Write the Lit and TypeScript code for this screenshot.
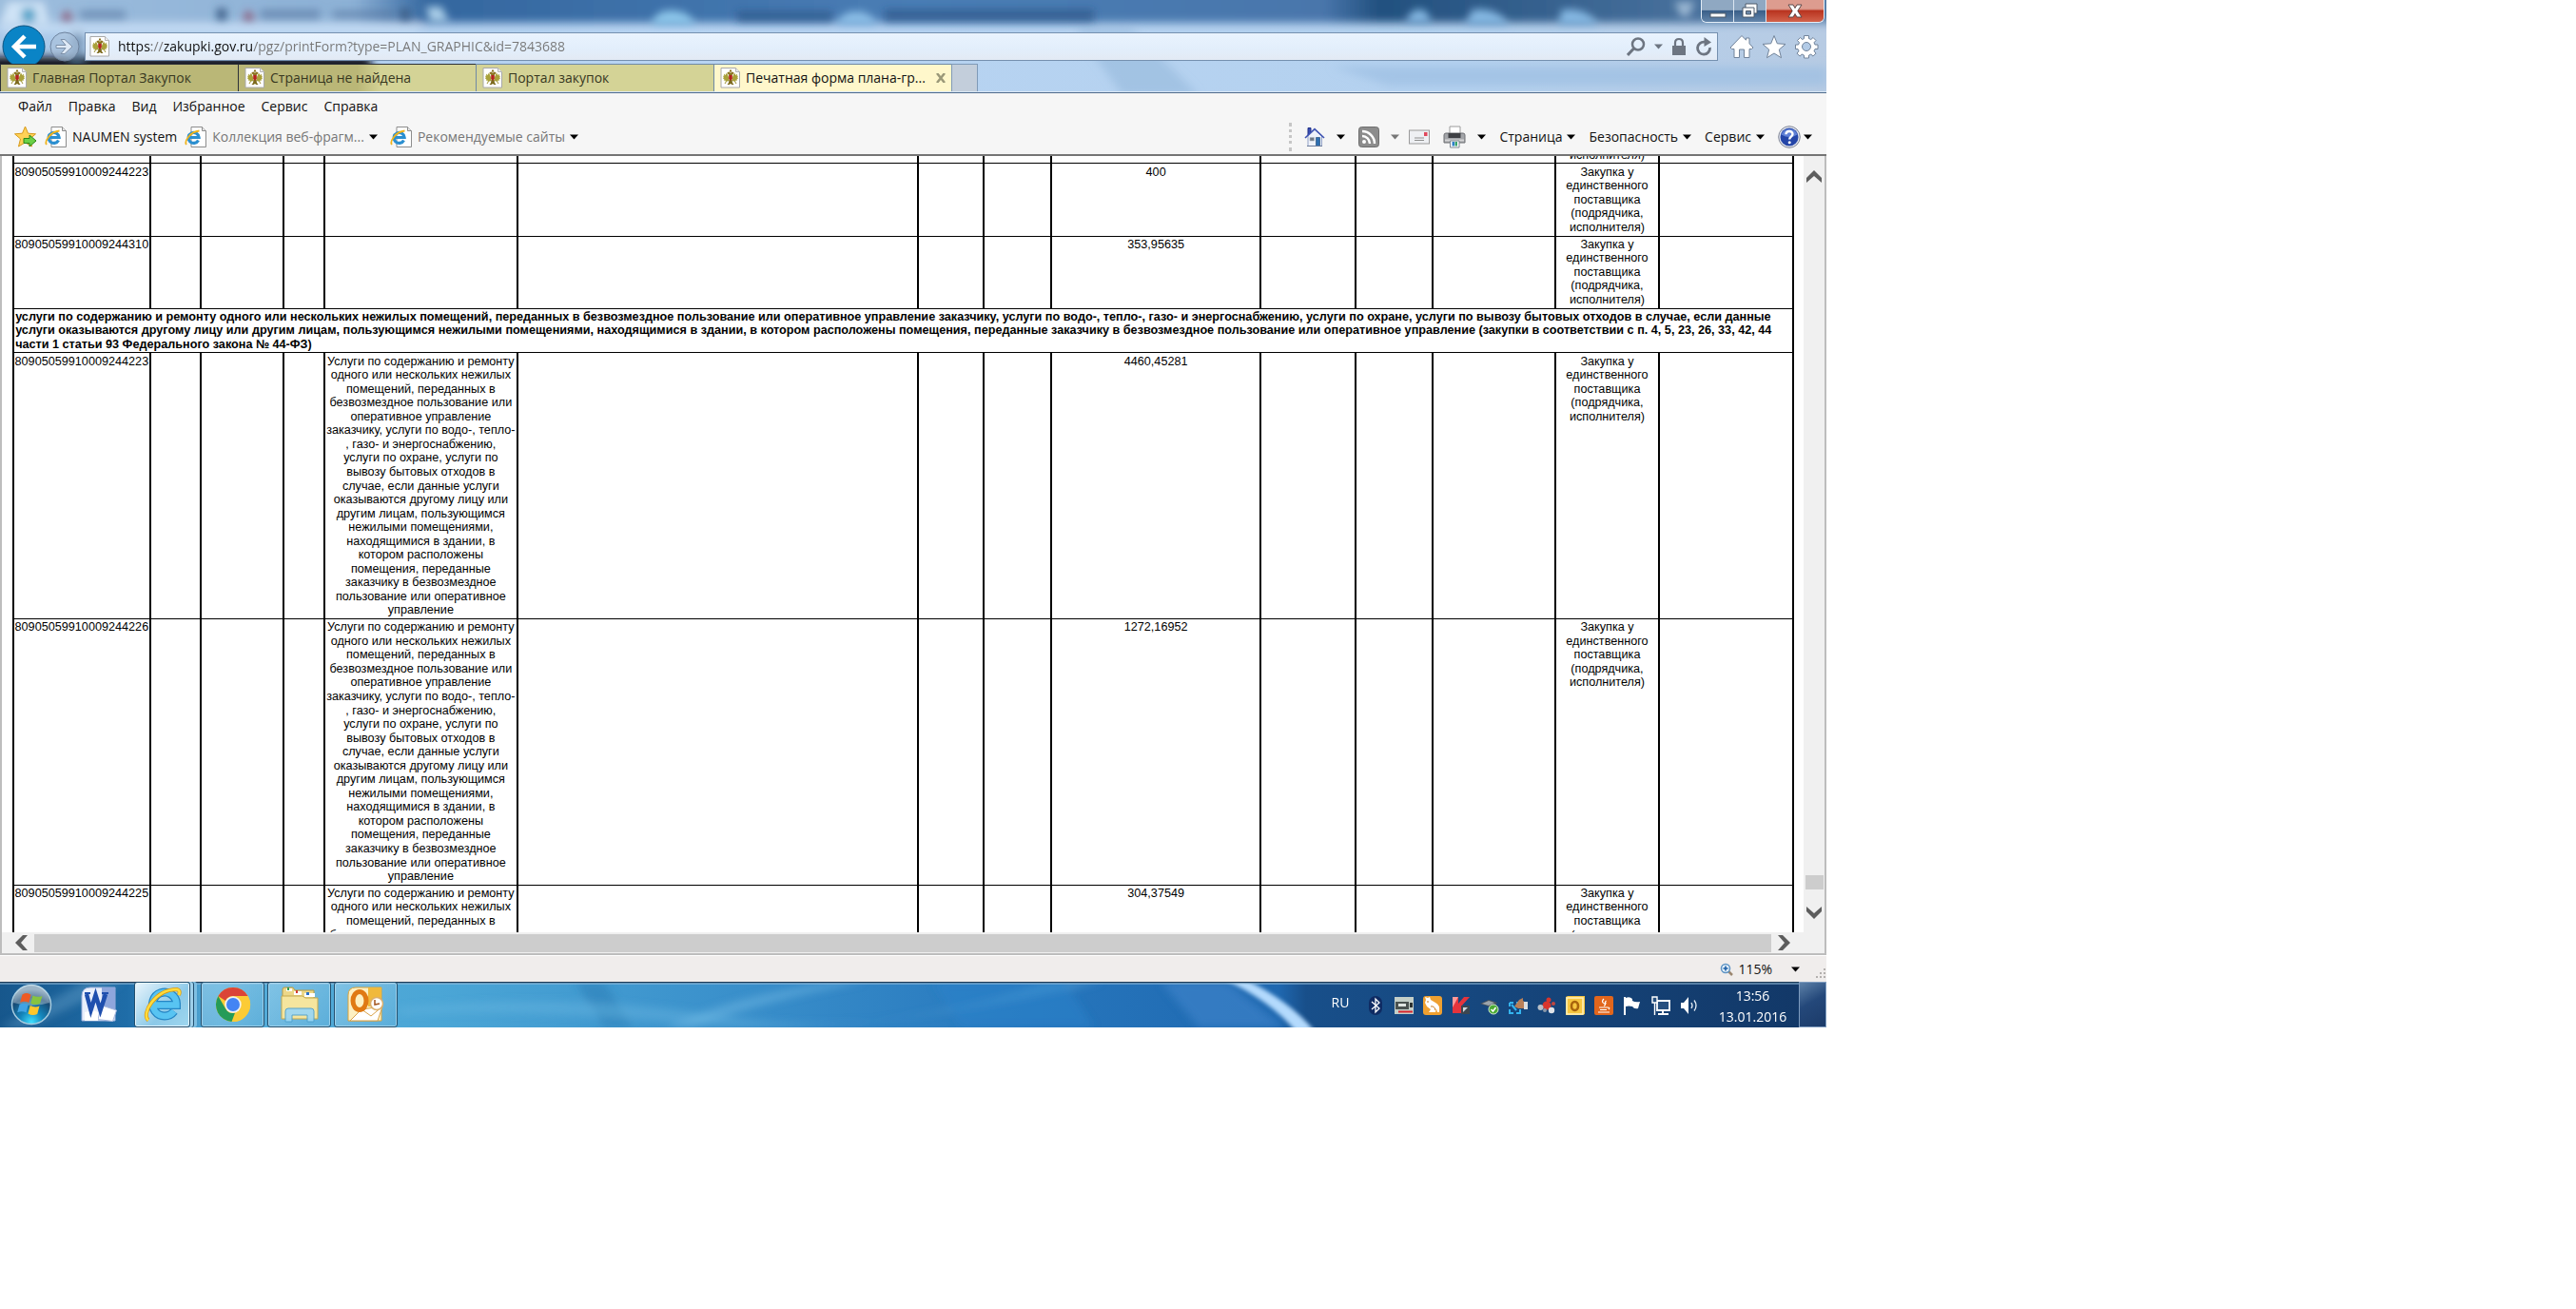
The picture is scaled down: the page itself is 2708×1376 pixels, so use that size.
import { LitElement, html, svg, css, nothing, type TemplateResult } from "lit";
import { customElement, property, state } from "lit/decorators.js";

const METHOD = "Закупка у единственного поставщика (подрядчика, исполнителя)";

const SECTION =
  "услуги по содержанию и ремонту одного или нескольких нежилых помещений, переданных в безвозмездное пользование или оперативное управление заказчику, услуги по водо-, тепло-, газо- и энергоснабжению, услуги по охране, услуги по вывозу бытовых отходов в случае, если данные услуги оказываются другому лицу или другим лицам, пользующимся нежилыми помещениями, находящимися в здании, в котором расположены помещения, переданные заказчику в безвозмездное пользование или оперативное управление (закупки в соответствии с п. 4, 5, 23, 26, 33, 42, 44 части 1 статьи 93 Федерального закона № 44-ФЗ)";

const SERVICES = html`Услуги по содержанию и ремонту одного или нескольких нежилых помещений,
переданных в безвозмездное пользование или оперативное управление заказчику, услуги по водо-,
тепло-<br />, газо- и энергоснабжению,<br />услуги по охране, услуги по<br />вывозу бытовых отходов в<br />случае,
если данные услуги<br />оказываются другому лицу или<br />другим лицам, пользующимся нежилыми
помещениями,<br />находящимися в здании, в<br />котором расположены<br />помещения, переданные<br />заказчику в
безвозмездное пользование или оперативное управление`;

interface PlanRow {
  code?: string;
  service?: boolean;
  price?: string;
  section?: string;
  method?: string;
}

const ROWS: PlanRow[] = [
  { method: "исполнителя)" },
  { code: "80905059910009244223", price: "400" },
  { code: "80905059910009244310", price: "353,95635" },
  { section: SECTION },
  { code: "80905059910009244223", service: true, price: "4460,45281" },
  { code: "80905059910009244226", service: true, price: "1272,16952" },
  { code: "80905059910009244225", service: true, price: "304,37549" },
];

/* Column widths of the plan at 100 % zoom. */
const COLUMNS = [125, 46, 76, 37, 177, 366, 60, 62, 191, 87, 70, 113, 94, 123];

/* ---------- icons ---------- */

const eagle = html`<svg class="page-icon" viewBox="0 0 22 22" width="22" height="22" aria-hidden="true">
  <path d="M1 .5h15.500l4 4V21H1z" fill="#fff" stroke="#a8a8a8" />
  <path d="M16.500 .5v4h4" fill="#eee" stroke="#b5b5b5" />
  <path d="M9.500 11 7 5.500 5.500 8 4 6.500 4.200 9 3 8.500l.8 2.300-1 .2 1.700 1.700-.8.800 2.300.3-.5 1.200L9.500 14z" fill="#a9a13a" />
  <path d="M12.500 11 15 5.500 16.500 8 18 6.500 17.800 9l1.200-.5-.8 2.300 1 .2-1.700 1.700.8.800-2.300.3.5 1.200L12.500 14z" fill="#a9a13a" />
  <path d="M8 6.500 7.500 5 10 4.500l1 1.500 1-1.500 2.500.5L14 6.500 12.500 8h-3zM10 2.500h2v2h-2z" fill="#8c7420" />
  <path d="M9.500 13h3l.5 3 1.500 2h-2L11 17l-1.500 1h-2L9 16z" fill="#7d6a1e" />
  <path d="M9.200 8h3.600v4L11 13.700 9.200 12z" fill="#b3241c" />
  <path d="M6.500 14.500 5 17m10.500-2.500L17 17" stroke="#9c9030" />
</svg>`;

const iePage = html`<svg viewBox="0 0 24 24" width="24" height="24" aria-hidden="true">
  <path d="M7 1.500h11.500l4 4v17H7z" fill="#fff" stroke="#8d8d8d" />
  <path d="M18.500 1.500v4h4" fill="#e8e8e8" stroke="#8d8d8d" />
  <path d="M14.500 15.500a5.500 5.500 0 1 1 .6-3H5" fill="none" stroke="#2b8fd0" stroke-width="3.200" />
  <path d="M2 20C-.5 17 5.500 6.500 15.500 5.500" fill="none" stroke="#f0b41c" stroke-width="1.800" />
</svg>`;

const caret = (gray = false) => html`<svg class="caret" viewBox="0 0 9 6" width="9" height="6" aria-hidden="true">
  <path d="M0 .5h9L4.500 5.500z" fill=${gray ? "#777" : "#000"} />
</svg>`;

const toolIcons = {
  star: html`<svg viewBox="0 0 24 24" width="24" height="24" aria-hidden="true">
    <path d="M11.500 1l3 7.200 8 .6-6 5.200 2 8-7-4.200L4.500 22l2-8-6-5.200 8-.6z" fill="#ffd257" stroke="#d79a1c" />
    <path d="M10 13.500h6v-3.500l7 6-7 6V18.500h-6z" fill="#6bd147" stroke="#2c8418" />
  </svg>`,
  home: html`<svg viewBox="0 0 22 22" width="22" height="22" aria-hidden="true">
    <path d="M4 1.500h3V6L4 9z" fill="#3a4fb5" stroke="#1e2f86" />
    <path d="M4 10v10.500h14.500V10L11 3.500z" fill="#eef2fa" stroke="#93a2c6" />
    <path d="M1 12 11 2.500 21 12" fill="none" stroke="#3c51b2" stroke-width="1.600" />
    <path d="M6 11.500h4.500V15H6z" fill="#6f7885" stroke="#aab3c0" stroke-width=".6" />
    <path d="M12.500 11.500h4v9h-4z" fill="#2d6fb0" stroke="#17406f" stroke-width=".6" />
    <path d="M3 20.500h16" stroke="#6d7d9c" />
  </svg>`,
  rss: html`<svg viewBox="0 0 22 22" width="22" height="22" aria-hidden="true">
    <rect x=".5" y=".5" width="21" height="21" rx="3" fill="#8c8c8c" stroke="#6f6f6f" />
    <circle cx="6" cy="16" r="2" fill="#fff" />
    <path d="M4 10a8 8 0 0 1 8 8M4 5a13 13 0 0 1 13 13" fill="none" stroke="#fff" stroke-width="2.500" />
  </svg>`,
  mail: html`<svg viewBox="0 0 22 16" width="22" height="16" aria-hidden="true">
    <rect x=".5" y="1" width="21" height="14" fill="#eef0f3" stroke="#9a9a9a" />
    <path d="M16 3h3.500v4H16z" fill="#e0495c" />
    <path d="M6 9h10M6 11.500h10" stroke="#8f8f8f" />
  </svg>`,
  print: html`<svg viewBox="0 0 24 24" width="24" height="24" aria-hidden="true">
    <path d="M7 1h11v9H7z" fill="#fff" stroke="#9b9b9b" />
    <path d="M1 10q0-2 2-2h18q2 0 2 2v8H1z" fill="#a3a5a9" stroke="#6e7074" />
    <path d="M5.500 8h13v5h-13z" fill="#3f4145" />
    <path d="M2 15.500h20" stroke="#d5d5d5" stroke-width="2" />
    <path d="M7.500 16h9.500v7H7.500z" fill="#fff" stroke="#7d8790" />
    <path d="M9.500 17h2.500v4.500H9.500z" fill="#2f7fc9" />
    <path d="M12.500 17H15v4.500h-2.500z" fill="#39a36d" />
  </svg>`,
  help: html`<svg viewBox="0 0 24 24" width="24" height="24" aria-hidden="true">
    <circle cx="12" cy="12" r="11.300" fill="#e3e6ee" stroke="#7f8595" />
    <circle cx="12" cy="12" r="9.500" fill="#2546a8" />
    <path d="M3.500 9.500a9 9 0 0 1 17 0q-8 5-17 0z" fill="#5f80d6" />
    <path d="M8.500 9.300C8.500 5 15.500 5 15.500 9c0 2.600-3.300 2.600-3.300 5.500" fill="none" stroke="#fff" stroke-width="2.400" />
    <circle cx="12.200" cy="17.700" r="1.500" fill="#fff" />
  </svg>`,
};

const taskIcons = {
  start: html`<svg viewBox="0 0 44 44" width="44" height="44" aria-hidden="true">
    <defs>
      <radialGradient id="orb" cx="50%" cy="95%" r="85%">
        <stop offset="0" stop-color="#3fe0ff" /><stop offset=".35" stop-color="#1487bd" /><stop offset=".75" stop-color="#174a74" /><stop offset="1" stop-color="#6f93ad" />
      </radialGradient>
    </defs>
    <circle cx="22" cy="22" r="20.500" fill="url(#orb)" stroke="#a9cde0" stroke-width="1.500" />
    <path d="M3 20a19 19 0 0 1 38 0q-18 6-38 0z" fill="#fff" opacity=".32" />
    <path d="M12.500 11.500q5-3 9 .2L19.300 20q-4-2.500-9.200-.2z" fill="#ee5a24" />
    <path d="M23.500 12.500q5 2.500 10 .4L31 21q-5 2.300-9.800-.2z" fill="#86c440" />
    <path d="M9.500 22q5-2.500 9.200.1L16.500 30.500q-4-2.500-9.300-.3z" fill="#41a3e4" />
    <path d="M20.700 23q5 2.600 9.800.4L28.200 32q-5 2.300-9.700-.5z" fill="#ffc62b" />
  </svg>`,
  word: html`<svg viewBox="0 0 38 38" width="38" height="38" aria-hidden="true">
    <path d="M1 10Q1 1 10 1h26v35H1z" fill="#e9effb" stroke="#9db2dd" />
    <path d="M22 1h14v24L22 20z" fill="#8ea6dc" />
    <path d="M18 34.500 22 20l15.500 5-4 11.500z" fill="#fff" stroke="#a9b9de" />
    <path d="M4 36V27q10-3 14 0v9z" fill="#fff" />
    <path d="M6 8l4.500 17L15.500 9l5 16L26 8" fill="none" stroke="#1f4fae" stroke-width="4.500" />
    <path d="M4 7h6M22 7h7" stroke="#1f4fae" stroke-width="2" />
  </svg>`,
  ie: html`<svg viewBox="0 0 40 40" width="40" height="40" aria-hidden="true">
    <path d="M32 27a12.500 12.500 0 1 1 2.500-8v1.500H12" fill="none" stroke="#2586c5" stroke-width="9" />
    <path d="M32 27a12.500 12.500 0 1 1 2.500-8v1.500H12" fill="none" stroke="#58c4f2" stroke-width="6.500" />
    <path d="M5 36.500C-3 30 12 4 35 4q4 1 2 6" fill="none" stroke="#d99a12" stroke-width="4" />
    <path d="M5 36.500C-3 30 12 4 35 4q4 1 2 6" fill="none" stroke="#ffdb3d" stroke-width="2.600" />
  </svg>`,
  chrome: html`<svg viewBox="0 0 38 38" width="38" height="38" aria-hidden="true">
    <circle cx="19" cy="19" r="18" fill="#fccb35" />
    <path d="M3.400 10A18 18 0 0 1 34.600 10H19a9 9 0 0 0-8 5z" fill="#db4437" />
    <path d="M34.600 10H19a9 9 0 0 1 8 13l-8 14A18 18 0 0 0 34.600 10z" fill="#fccb35" />
    <path d="M3.400 10 11.200 23.500A9 9 0 0 0 21 27.700L17.500 37A18 18 0 0 1 3.400 10z" fill="#259b58" />
    <circle cx="19" cy="19" r="8.700" fill="#f1f1f1" />
    <circle cx="19" cy="19" r="7" fill="#4384f4" />
  </svg>`,
  folder: html`<svg viewBox="0 0 42 40" width="42" height="40" aria-hidden="true">
    <path d="M3 33V4q0-2 2-2h9l2 3h20v28z" fill="#ecd788" stroke="#b79b45" />
    <path d="M7 3h6v3H7z" fill="#fff" /><path d="M8 2h2v3H8z" fill="#2f9a4c" />
    <path d="M15 6h8v4h-8z" fill="#fff" /><path d="M17 5h2v3h-2z" fill="#d33b2f" />
    <path d="M26 8h11v4H26z" fill="#fff" /><path d="M28 7h3v3h-3z" fill="#2a6fc4" />
    <path d="M2 11h22l3 2h13v22H2z" fill="#f5e59e" stroke="#c4a94f" />
    <path d="M6 38V27q0-3 3-3h24q3 0 3 3v11h-7v-7H13v7z" fill="#9bd7f3" stroke="#4c9fcc" opacity=".93" />
  </svg>`,
  outlook: html`<svg viewBox="0 0 40 38" width="40" height="38" aria-hidden="true">
    <path d="M1 9Q1 1 9 1h27v35H1z" fill="#fdf0c2" stroke="#d9a23a" />
    <path d="M22 1h14v20H22z" fill="#f0b93c" />
    <path d="M3 36 15 24l22-3-5 15z" fill="#fff" stroke="#d9a34a" />
    <path d="M15 24l10 7 12-10" fill="none" stroke="#d9a34a" />
    <ellipse cx="13" cy="15" rx="7" ry="9.500" fill="none" stroke="#e07a14" stroke-width="5" />
    <circle cx="31" cy="18" r="6.500" fill="#fff" stroke="#dcae6b" stroke-width="1.500" />
    <path d="M29 14v5l5-1" fill="none" stroke="#a3531c" stroke-width="1.500" />
  </svg>`,
};

const tray: [string, TemplateResult][] = [
  ["Bluetooth", svg`<rect x="3" y="0" width="14" height="20" rx="7" fill="#0f2b63"/><path d="M6 6l8 7-4 4V3l4 4-8 7" fill="none" stroke="#fff" stroke-width="1.300"/>`],
  ["Безопасное извлечение", svg`<path d="M0 1h20v18H0z" fill="#c4cfc8"/><path d="M1 6h14v8H1z" fill="#4a5250"/><path d="M4 8h8v3H4z" fill="#dfe6e2"/><path d="M16 7h3v5h-3z" fill="#2d3231"/><path d="M4 15.500h15v2H4z" fill="#d8252c"/>`],
  ["Агент", svg`<rect width="20" height="20" rx="3" fill="#efa030"/><path d="M2 1l3 1 2-1 1 3 5 3q5 2 4 10h-2l-1-4-1 4H6l2-3-4-3-2-4 1-3z" fill="#fff"/><path d="M5 5v2m3 4q4-1 5 4" stroke="#c9791a" fill="none"/>`],
  ["Антивирус", svg`<path d="M1 1h6v7l6-7h6l-9 10v7H1z" fill="#e5343c"/><path d="M1 1h6L1 12z" fill="#ff9a9a"/><path d="M10 10h9v9h-9z" fill="#3b4650"/><path d="M12 12h5l-5 5z" fill="#cfd8dd"/>`],
  ["Устройство подключено", svg`<path d="M0 8 9 4l9 3-6 5z" fill="#4c555d"/><path d="M2 8l7-3 6 2-6 3z" fill="#9aa4ac"/><circle cx="14" cy="14" r="5" fill="#4bab34" stroke="#d4ecd0"/><path d="M11.500 14l2 2 3-4" fill="none" stroke="#fff" stroke-width="1.500"/>`],
  ["Ввод", svg`<path d="M1 7h4M1 7v4M8 18h4v-4M1 14v4h4M8 7h3" stroke="#34b4ef" stroke-width="2" fill="none"/><path d="M6 11 11 4l4-2v3l3 2v6h-8z" fill="#b98058"/><path d="M16 6h4v8h-4z" fill="#d9dde0"/><path d="M3 9l5 6" stroke="#34b4ef" stroke-width="2"/>`],
  ["Сеть агентов", svg`<circle cx="10" cy="10" r="4.500" fill="#d8352d"/><circle cx="3.500" cy="12" r="3" fill="#b9c0c8"/><circle cx="12" cy="4" r="2.500" fill="#d8352d"/><circle cx="15" cy="15" r="3.200" fill="#dfe3e8"/><circle cx="17" cy="8" r="2" fill="#c04640"/><circle cx="8" cy="15" r="2" fill="#8b98a8"/>`],
  ["Outlook", svg`<path d="M0 1 2 0h18v19l-2 1H0z" fill="#f6c640"/><path d="M1 2h17v17H1z" fill="none" stroke="#fff1bf" stroke-width="1.500"/><ellipse cx="9.500" cy="10.500" rx="3.500" ry="4.500" fill="none" stroke="#a8640c" stroke-width="2.600"/>`],
  ["Java", svg`<rect width="20" height="20" rx="2" fill="#e2661c"/><path d="M10 3q-3 3 0 4.500t0 3M12.500 5q-2 2 0 3M5 12h9M6 14.500h7M4 17h12M14 12q3 0 1 2" fill="none" stroke="#fff" stroke-width="1.200"/>`],
  ["Центр поддержки", svg`<path d="M2 1v19" stroke="#fff" stroke-width="2"/><path d="M3 2q4-2 7 1v2q3 2 8 1l-2 7q-4 1-6-2-4-1-7 0z" fill="#fff"/>`],
  ["Сеть", svg`<path d="M6 5h13v10H6z" fill="#27507f" stroke="#fff" stroke-width="1.800"/><path d="M12 15v3m-5 1h11" stroke="#fff" stroke-width="2"/><path d="M1 1h5v6H1z" fill="#27507f" stroke="#fff" stroke-width="1.400"/><path d="M3.500 7v13" stroke="#fff" stroke-width="1.400"/>`],
  ["Громкость", svg`<path d="M1 7h3l5-6v18l-5-6H1z" fill="#fff"/><path d="M12 7q2 3 0 6M15 4.500q4 5.500 0 11" fill="none" stroke="#e6eef6" stroke-width="1.300"/>`],
];

/* ---------- browser chrome ---------- */

@customElement("browser-header")
class BrowserHeader extends LitElement {
  @property() url = "";
  @state() private tabs = ["Главная Портал Закупок", "Страница не найдена", "Портал закупок", "Печатная форма плана-гр..."];
  @state() private current = 3;

  static styles = css`
    :host { display: block; position: relative; overflow: hidden; background: #b7d2ef; font: 14px/20px "Open Sans", "Noto Sans", sans-serif; }
    .glass { position: absolute; inset: 0; width: 100%; height: 100%; }
    button { border: 0; margin: 0; padding: 0; background: none; font: inherit; color: inherit; }
    svg { display: block; flex: none; }
    .title { position: relative; display: flex; justify-content: flex-end; height: 24px; padding-right: 2px; }
    .controls { display: flex; border: 1px solid #e3edf7; border-top: 0; border-radius: 0 0 6px 6px; overflow: hidden; }
    .controls button { display: grid; place-items: center; width: 34px; background: linear-gradient(#8fa8c2 0 45%, #3a5f89 50%, #6385aa); border-right: 1px solid #dbe6f1; }
    .controls .close { width: 60px; border-right: 0; background: linear-gradient(#dd9c8f 0 40%, #b93420 50%, #d2624b); }
    .nav { position: relative; display: flex; align-items: center; box-sizing: border-box; height: 43px; padding: 6px 8px 0 2px; }
    .forward { margin: 0 5px 0 4px; }
    .address { flex: 1; display: flex; align-items: center; box-sizing: border-box; height: 30px; padding: 0 5px 0 4px; border: 1px solid #7590af; background: linear-gradient(#e9f3fe, #e2eefb 60%, #e3eaf4); margin-right: 12px; }
    input { flex: 1; min-width: 0; border: 0; outline: 0; padding: 0; margin: 0 0 0 8px; height: 24px; font: inherit; color: transparent; background: linear-gradient(90deg, #111 0 35px, #777 35px 49px, #111 49px 142px, #777 142px) text; }
    .address button + button { margin-left: 9px; }
    .side { display: flex; gap: 8px; }
    .tabs { position: relative; display: flex; height: 29px; }
    .tab { display: flex; align-items: center; gap: 5px; box-sizing: border-box; width: 250px; padding: 0 6px; border: 1px solid #6f89a5; border-width: 1px 0 0 1px; background: #d4d396; color: #37371f; }
    .tab:first-child { background: #bab777; border-color: #2d3138; }
    .tab:nth-child(2) { background: linear-gradient(90deg, #bab777 50%, #d4d396 60%); border-color: #2d3138; }
    .tab.current { background: #fff7cb; color: #111; }
    .tab span { flex: 1; text-align: left; white-space: nowrap; }
    .new { width: 28px; border: 1px solid #7f9ab8; border-bottom: 0; background: #c3cedb; }
    .edge { position: relative; height: 2px; border-top: 1px solid #dbe8f5; border-bottom: 1px solid #4d6a8c; box-sizing: border-box; }
  `;

  render() {
    return html`
      <svg class="glass" viewBox="0 0 1920 98" preserveAspectRatio="none" aria-hidden="true">
        <defs>
          <filter id="soft" x="-10%" y="-40%" width="120%" height="180%"><feGaussianBlur stdDeviation="5" /></filter>
          <filter id="dim" x="-10%" y="-40%" width="120%" height="180%"><feGaussianBlur stdDeviation="4" /></filter>
          <linearGradient id="sky" x2="1"><stop offset="0" stop-color="#a9c8e8" /><stop offset=".35" stop-color="#b8d4f2" /><stop offset=".8" stop-color="#b4d1ef" /><stop offset="1" stop-color="#b7cbe3" /></linearGradient>
          <linearGradient id="top" x2="1"><stop offset="0" stop-color="#9dbddd" /><stop offset=".2" stop-color="#8db1d6" /><stop offset=".24" stop-color="#34679f" /><stop offset=".5" stop-color="#4a7db5" /><stop offset=".72" stop-color="#4976ab" /><stop offset=".75" stop-color="#22507f" /><stop offset="1" stop-color="#5b81ab" /></linearGradient>
        </defs>
        <rect width="1920" height="98" fill="url(#sky)" />
        <g filter="url(#soft)">
          <rect x="-20" y="-20" width="1960" height="44" fill="url(#top)" />
          <rect x="-10" y="60" width="400" height="42" fill="#0c1016" />
          <path d="M75 28h12v50H75z" fill="#54708f" opacity=".6" />
          <path d="M1130 30h60l70 70h-80z" fill="#8fb3d8" opacity=".5" />
          <path d="M1400 70h520v20h-460z" fill="#9dbfe2" opacity=".7" />
          <path d="M0 24h440v10H0z" fill="#c4dcf4" />
        </g>
        <g filter="url(#dim)">
          <path d="M8 2h38l6 24H0z" fill="#cfe3f6" />
          <circle cx="30" cy="16" r="8" fill="#4fa3c9" />
          <path d="M64 21l6-11 7 11zM255 21l6-11 7 11z" fill="#8c4f6c" />
          <path d="M84 11h48v9H84zM274 10h62v10h-62zM350 11h66v8h-66z" fill="#5577a0" opacity=".6" />
          <path d="M228 9h10v12h-10zM421 9h10v12h-10z" fill="#3c5f88" />
          <path d="M448 7h16l8 16h-20z" fill="#a9cde8" />
          <path d="M685 26q4-16 22-15t24 15z" fill="#8cc6ea" />
          <path d="M775 12h100v11H775zM930 10h220v13H930z" fill="#274f80" opacity=".6" />
          <path d="M880 26q4-14 20-14t22 14z" fill="#8abde6" />
          <path d="M1478 24q4-14 14-14t12 14zM1540 26l8-16q28-2 38 16zM1638 26l4-16q28-2 38 16z" fill="#84b7e2" />
          <path d="M1760 2h22l-8 16h-6z" fill="#9db9d4" />
        </g>
      </svg>
      <div class="title">
        <div class="controls">
          <button aria-label="Свернуть"><svg viewBox="0 0 34 22" width="34" height="22"><rect x="9" y="13" width="16" height="4" fill="#fff" stroke="#4c5a6b" /></svg></button>
          <button aria-label="Восстановить"><svg viewBox="0 0 34 22" width="34" height="22"><path d="M12 3h12v10h-3v4H9V7h3z" fill="#fff" stroke="#4c5a6b" /><path d="M12 7h9v6" fill="none" stroke="#4c5a6b" /><path d="M12.500 10.500h5v3.500h-5z" fill="#6c88a8" stroke="#4c5a6b" /></svg></button>
          <button class="close" aria-label="Закрыть"><svg viewBox="0 0 22 22" width="22" height="22"><path d="M4 4h5l2 3.500L13 4h5l-4.200 6.500L18 17h-5l-2-3.500L9 17H4l4.200-6.500z" fill="#fff" stroke="#5d4747" /></svg></button>
        </div>
      </div>
      <div class="nav">
        <button aria-label="Назад"><svg viewBox="0 0 46 46" width="46" height="46"><circle cx="23" cy="23" r="22" fill="#0a84c6" stroke="#0b527f" /><path d="M36 23H13M24 12 13 23l11 11" fill="none" stroke="#fff" stroke-width="4.500" /></svg></button>
        <button class="forward" aria-label="Вперёд"><svg viewBox="0 0 32 32" width="32" height="32"><circle cx="16" cy="16" r="15" fill="#a9bfd9" fill-opacity=".6" stroke="#6d829d" /><path d="M7 14.500h10l-5-6h4l8 7.500-8 7.500h-4l5-6H7z" fill="#dfeaf6" stroke="#7d90a8" /></svg></button>
        <div class="address">
          ${eagle}
          <input type="text" aria-label="Адрес" .value=${this.url} />
          <button aria-label="Поиск"><svg viewBox="0 0 20 20" width="20" height="20"><circle cx="12" cy="7.500" r="6" fill="none" stroke="#6d7581" stroke-width="2.500" /><path d="M7.500 12 1 19" stroke="#6d7581" stroke-width="3" /></svg></button>
          <button aria-label="Варианты поиска"><svg viewBox="0 0 9 6" width="9" height="6"><path d="M0 .5h9L4.500 5.500z" fill="#6d7581" /></svg></button>
          <button aria-label="Сертификат"><svg viewBox="0 0 16 20" width="16" height="20"><path d="M1 9h14v10H1z" fill="#6d7581" /><path d="M4 9V6q0-4 4-4t4 4v3" fill="none" stroke="#6d7581" stroke-width="2.200" /></svg></button>
          <button aria-label="Обновить"><svg viewBox="0 0 18 20" width="18" height="20"><path d="M10 5.200A6.500 6.500 0 1 0 15.500 11" fill="none" stroke="#6d7581" stroke-width="2.800" /><path d="M9.500 0 17 5.500 9.500 10z" fill="#6d7581" /></svg></button>
        </div>
        <div class="side">
          <button aria-label="Домашняя страница"><svg viewBox="0 0 26 26" width="26" height="26"><path d="M1 14 13 1.500l4.500 4.700V4h3.500v5.800L25 14l-1.500 1.500H21V24.500h-5.500V16h-5v8.500H5v-9H2.500z" fill="#fff" stroke="#71839a" /></svg></button>
          <button aria-label="Избранное"><svg viewBox="0 0 26 26" width="26" height="26"><path d="M13 1.500l3.300 8.300 8.700.6-6.700 5.700 2.200 8.600L13 20l-7.500 4.700 2.200-8.600L1 10.400l8.700-.6z" fill="#fff" stroke="#71839a" /></svg></button>
          <button aria-label="Параметры"><svg viewBox="0 0 26 26" width="26" height="26"><path d="M10.500 1.500h5v3l2.300 1 2.200-2 3 3-2 2.300 1 2.200h3v4.500h-3l-1 2.300 2 2.300-3 3-2.200-2-2.300 1v2.900h-5v-2.900l-2.300-1-2.200 2-3-3 2-2.300-1-2.300H1.500V11h3l1-2.200-2-2.300 3-3 2.200 2 1.800-1z" fill="#fff" stroke="#71839a" /><circle cx="13" cy="13" r="4.500" fill="#b3cbe6" stroke="#71839a" /></svg></button>
        </div>
      </div>
      <div class="tabs" role="tablist">
        ${this.tabs.map(
          (name, i) => html`<button class="tab ${i === this.current ? "current" : ""}" role="tab"
            aria-selected=${i === this.current} @click=${() => (this.current = i)}>
            ${eagle}<span>${name}</span>
            ${i === this.current
              ? html`<svg viewBox="0 0 10 10" width="10" height="10" aria-label="Закрыть вкладку"><path d="M1 0l8 10M9 0 1 10" stroke="#9b9878" stroke-width="2.500" /></svg>`
              : nothing}
          </button>`,
        )}
        <button class="new" aria-label="Новая вкладка"></button>
      </div>
      <div class="edge"></div>
    `;
  }
}

@customElement("browser-toolbars")
class BrowserToolbars extends LitElement {
  private menus = ["Файл", "Правка", "Вид", "Избранное", "Сервис", "Справка"];

  static styles = css`
    :host { display: block; background: #f6f6f6; border-bottom: 2px solid #757575; font: 14px/20px "Open Sans", "Noto Sans", sans-serif; color: #111; }
    button { display: flex; align-items: center; border: 0; margin: 0; padding: 0; background: none; font: inherit; color: inherit; white-space: nowrap; }
    svg { display: block; flex: none; }
    .menu { display: flex; gap: 17px; height: 27px; align-items: center; padding-left: 19px; }
    .row { display: flex; align-items: center; justify-content: space-between; height: 37px; padding: 0 15px; }
    .group { display: flex; align-items: center; }
    .links { gap: 8px; }
    .links button { gap: 5px; }
    .links .muted { color: #777; }
    .links .muted + .muted { margin-left: 5px; }
    .commands { gap: 14px; padding-left: 13px; border-left: 3px dotted #c6c6c6; height: 30px; }
    .commands button { gap: 5px; }
    .commands .wide { gap: 12px; }
    .commands .tight { gap: 3px; }
    .mail { margin-left: -4px; }
  `;

  render() {
    return html`
      <nav class="menu">${this.menus.map((m) => html`<button>${m}</button>`)}</nav>
      <div class="row">
        <div class="group links">
          <button aria-label="Добавить в избранное">${toolIcons.star}</button>
          <button>${iePage}NAUMEN system</button>
          <button class="muted">${iePage}Коллекция веб-фрагм...${caret()}</button>
          <button class="muted">${iePage}Рекомендуемые сайты${caret()}</button>
        </div>
        <div class="group commands">
          <button class="wide" aria-label="Домашняя страница">${toolIcons.home}${caret()}</button>
          <button class="wide" aria-label="Веб-каналы">${toolIcons.rss}${caret(true)}</button>
          <button class="mail" aria-label="Почта">${toolIcons.mail}</button>
          <button class="wide" aria-label="Печать">${toolIcons.print}${caret()}</button>
          <button>Страница${caret()}</button>
          <button>Безопасность${caret()}</button>
          <button>Сервис${caret()}</button>
          <button class="tight" aria-label="Справка">${toolIcons.help}${caret()}</button>
        </div>
      </div>
    `;
  }
}

/* ---------- document ---------- */

@customElement("plan-document")
class PlanDocument extends LitElement {
  @property({ type: Number }) zoom = 100;

  static styles = css`
    :host { display: grid; grid-template: minmax(0, 1fr) 22px / minmax(0, 1fr) 22px; min-height: 0; background: #f0f0f0; border: 2px solid #bdbdbd; border-top: 0; box-sizing: border-box; }
    .page { overflow: hidden; background: #fff; padding: 0 12px 0 11px; }
    table { width: 100%; margin-top: -9px; table-layout: fixed; border-collapse: collapse; font: 11px/1.15 "Liberation Sans", Arial, sans-serif; color: #000; }
    td { border: solid #000; border-width: 1px 2px; padding: 1px 0; vertical-align: top; text-align: center; }
    td.section { text-align: left; font-weight: bold; padding: 1px; }
    .bar { display: flex; align-items: center; }
    .vertical { flex-direction: column; justify-content: space-between; padding: 15px 0 14px; }
    .horizontal { padding: 0 14px; }
    .thumb { background: #cdcdcd; }
    .horizontal .thumb { flex: 1; height: 19px; margin: 0 7px; }
    .vertical .thumb { width: 19px; height: 15px; margin-top: auto; margin-bottom: 18px; }
    button { display: block; border: 0; padding: 0; background: none; }
    svg { display: block; }
  `;

  private arrow(label: string, d: string, box: string) {
    const [w, h] = box.split(" ");
    return html`<button aria-label=${label}><svg viewBox="0 0 ${w} ${h}" width=${w} height=${h}>
      <path d=${d} fill="#5d5d5d" /></svg></button>`;
  }

  private row(r: PlanRow) {
    if (r.section) return html`<tr><td class="section" colspan=${COLUMNS.length}>${r.section}</td></tr>`;
    const cells: Record<number, unknown> = {
      0: r.code,
      4: r.service ? SERVICES : nothing,
      8: r.price,
      12: r.method ?? METHOD,
    };
    return html`<tr>${COLUMNS.map((_, i) => html`<td>${cells[i] ?? nothing}</td>`)}</tr>`;
  }

  render() {
    return html`
      <div class="page">
        <div style="zoom: ${this.zoom}%">
          <table>
            <colgroup>${COLUMNS.map((w) => html`<col style="width: ${w}px" />`)}</colgroup>
            <tbody>${ROWS.map((r) => this.row(r))}</tbody>
          </table>
        </div>
      </div>
      <div class="bar vertical">
        ${this.arrow("Вверх", "M0 8 8 0l8 8v5L8 6l-8 7z", "16 13")}
        <div class="thumb"></div>
        ${this.arrow("Вниз", "M0 5 8 13l8-8V0L8 7 0 0z", "16 13")}
      </div>
      <div class="bar horizontal">
        ${this.arrow("Влево", "M8 0 0 8l8 8h5L6 8l7-8z", "13 16")}
        <div class="thumb"></div>
        ${this.arrow("Вправо", "M5 0l8 8-8 8H0l7-8-7-8z", "13 16")}
      </div>
    `;
  }
}

@customElement("status-strip")
class StatusStrip extends LitElement {
  @property({ type: Number }) zoom = 100;

  static styles = css`
    :host { display: flex; justify-content: flex-end; align-items: center; height: 28px; background: #f0edec; border-top: 1px solid #fff; box-sizing: border-box; font: 14px/20px "Open Sans", "Noto Sans", sans-serif; }
    button { display: flex; align-items: center; gap: 5px; border: 0; padding: 0; margin-right: 16px; background: none; font: inherit; color: #111; }
    .caret { margin-left: 15px; }
    .grip { align-self: flex-end; margin-bottom: 2px; }
  `;

  render() {
    return html`
      <button>
        <svg viewBox="0 0 14 14" width="14" height="14" aria-hidden="true"><path d="M8 8l5 5" stroke="#9b8770" stroke-width="2.500" /><circle cx="6" cy="6" r="4.500" fill="#e6f2fb" stroke="#5d93c4" stroke-width="1.500" /><path d="M3.500 6h5M6 3.500v5" stroke="#1d5fa8" stroke-width="1.600" /></svg>
        ${this.zoom}% ${caret()}
      </button>
      <svg class="grip" viewBox="0 0 12 12" width="12" height="12" aria-hidden="true"><path d="M9 0h2v2H9zM9 4h2v2H9zM9 8h2v2H9zM5 4h2v2H5zM5 8h2v2H5zM1 8h2v2H1z" fill="#b3b0ae" /></svg>
    `;
  }
}

@customElement("task-bar")
class TaskBar extends LitElement {
  static styles = css`
    :host { display: flex; align-items: stretch; position: relative; overflow: hidden; height: 48px; color: #fff; font: 14px/20px "Open Sans", "Noto Sans", sans-serif; }
    .wall { position: absolute; inset: 0; width: 100%; height: 100%; }
    button { position: relative; display: grid; place-items: center; border: 0; margin: 0; padding: 0; background: none; color: inherit; font: inherit; }
    svg { display: block; }
    .start { width: 66px; }
    .word { width: 75px; }
    .apps { display: flex; gap: 3px; position: relative; }
    .app { width: 67px; box-sizing: border-box; border: 1px solid #23506f; border-radius: 3px; background: linear-gradient(135deg, #9fd3ee99, #6fb7de66); box-shadow: inset 0 0 0 1px #b7def2aa; }
    .app.active { width: 59px; margin-right: 8px; background: linear-gradient(135deg, #e9f5fc, #8cc9e8 60%, #9fd7ef); box-shadow: inset 0 0 0 1px #e6f5fd, 3px 0 0 #9fd0ea, 4px 0 0 #23506f, 7px 0 0 #7fbfe2; }
    .lang { margin-left: auto; width: 26px; padding-bottom: 4px; }
    .tray { position: relative; display: flex; align-items: center; gap: 10px; padding: 2px 0 0 14px; }
    .clock { box-sizing: border-box; width: 105px; align-content: center; line-height: 22px; padding: 3px 0 0 8px; }
    .show { width: 29px; border: 1px solid #7e9cbf; background: linear-gradient(150deg, #5d81a8, #24487a 45%, #1c3b69); }
  `;

  render() {
    return html`
      <svg class="wall" viewBox="0 0 1920 48" preserveAspectRatio="none" aria-hidden="true">
        <defs>
          <filter id="glow" x="-10%" y="-20%" width="120%" height="140%"><feGaussianBlur stdDeviation="4" /></filter>
          <filter id="shine" x="-30%" y="-20%" width="160%" height="140%"><feGaussianBlur stdDeviation="2" /></filter>
          <linearGradient id="base" x2="1">
            <stop offset="0" stop-color="#17578c" /><stop offset=".07" stop-color="#1f6da8" /><stop offset=".12" stop-color="#55acd8" /><stop offset=".24" stop-color="#4ba6d6" />
            <stop offset=".4" stop-color="#3a90cb" /><stop offset=".56" stop-color="#2777bd" /><stop offset=".7" stop-color="#1f68b0" /><stop offset=".715" stop-color="#184f8a" /><stop offset="1" stop-color="#123766" />
          </linearGradient>
        </defs>
        <rect width="1920" height="48" fill="url(#base)" />
        <g filter="url(#glow)">
          <path d="M0 48 90 0h40L30 48z" fill="#6ba4cc" opacity=".4" />
          <path d="M605 0h30l30 48h-30z" fill="#2b80b9" opacity=".6" />
          <path d="M700 48Q770 14 880 0h30Q800 20 730 48z" fill="#6fb8e4" opacity=".5" />
          <path d="M420 28Q600 10 760 36T1100 0h60Q900 60 720 44T420 34z" fill="#72bde6" opacity=".35" />
          <path d="M980 0h140l30 48h-140z" fill="#2a83cc" opacity=".5" />
          <path d="M1220 0h70l60 48h-90z" fill="#3f86cb" opacity=".6" />
        </g>
        <path filter="url(#shine)" d="M1284-4h22q50 24 76 56h-20q-26-32-78-56z" fill="#b4dafd" />
        <path d="M0 .5h1920" stroke="#1b3a57" stroke-width="2" />
        <path d="M0 2h1920" stroke="#9bc4e2" />
      </svg>
      <button class="start" aria-label="Пуск">${taskIcons.start}</button>
      <button class="word" aria-label="Word">${taskIcons.word}</button>
      <div class="apps">
        <button class="app active" aria-label="Internet Explorer">${taskIcons.ie}</button>
        <button class="app" aria-label="Chrome">${taskIcons.chrome}</button>
        <button class="app" aria-label="Проводник">${taskIcons.folder}</button>
        <button class="app" aria-label="Outlook">${taskIcons.outlook}</button>
      </div>
      <button class="lang">RU</button>
      <div class="tray">
        ${tray.map(([label, art]) => html`<button aria-label=${label}><svg viewBox="0 0 20 20" width="20" height="20">${art}</svg></button>`)}
      </div>
      <button class="clock"><span>13:56</span><span>13.01.2016</span></button>
      <button class="show" aria-label="Показать рабочий стол"></button>
    `;
  }
}

@customElement("app-root")
class AppRoot extends LitElement {
  @state() private zoom = 115;

  static styles = css`
    :host { display: grid; grid-template-columns: 480fr 197fr; align-items: start; min-height: 100vh; background: #fff; }
    .desktop { display: flex; flex-direction: column; aspect-ratio: 16 / 9; min-width: 0; overflow: hidden; }
    plan-document { flex: 1; }
  `;

  render() {
    return html`
      <main class="desktop">
        <browser-header url="https://zakupki.gov.ru/pgz/printForm?type=PLAN_GRAPHIC&id=7843688"></browser-header>
        <browser-toolbars></browser-toolbars>
        <plan-document .zoom=${this.zoom}></plan-document>
        <status-strip .zoom=${this.zoom}></status-strip>
        <task-bar></task-bar>
      </main>
    `;
  }
}
